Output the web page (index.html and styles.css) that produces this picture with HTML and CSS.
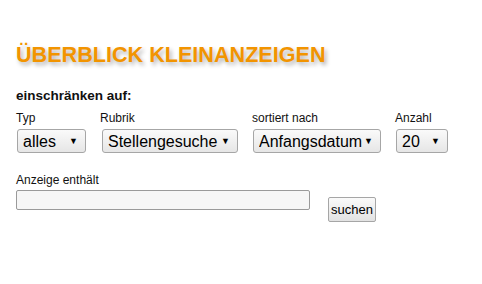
FILE: index.html
```html
<!DOCTYPE html>
<html lang="de">
<head>
    <meta charset="UTF-8">
    <title>Überblick Kleinanzeigen</title>
    <link rel="stylesheet" href="styles.css">
</head>
<body>

    <!-- Header -->
    <h1 class="page-title">Überblick Kleinanzeigen</h1>

    <!-- Filter form -->
    <form class="filter-form" onsubmit="return false;">
        <p class="filter-intro">einschränken auf:</p>

        <div class="filter-row">
            <div class="filter-col">
                <label for="typ">Typ</label>
                <div class="select-box sel-typ">
                    <select id="typ">
                        <option>alles</option>
                        <option>Angebote</option>
                        <option>Gesuche</option>
                    </select>
                </div>
            </div>
            <div class="filter-col">
                <label for="rubrik">Rubrik</label>
                <div class="select-box sel-rubrik">
                    <select id="rubrik">
                        <option>Stellengesuche</option>
                        <option>Stellenangebote</option>
                    </select>
                </div>
            </div>
            <div class="filter-col">
                <label for="sort">sortiert nach</label>
                <div class="select-box sel-sort">
                    <select id="sort">
                        <option>Anfangsdatum</option>
                        <option>Enddatum</option>
                    </select>
                </div>
            </div>
            <div class="filter-col">
                <label for="anzahl">Anzahl</label>
                <div class="select-box sel-anzahl">
                    <select id="anzahl">
                        <option>20</option>
                        <option>50</option>
                        <option>100</option>
                    </select>
                </div>
            </div>
        </div>

        <div class="search-row">
            <div class="search-col">
                <label for="suche">Anzeige enthält</label>
                <input type="text" id="suche">
            </div>
            <button type="submit" class="search-btn">suchen</button>
        </div>
    </form>

</body>
</html>
```

FILE: styles.css
```css
/* Reset styles */
* {
    margin: 0;
    padding: 0;
    box-sizing: border-box;
}

body {
    font-family: "Liberation Sans", Arial, sans-serif;
    color: #111;
    background-color: #fff;
    padding: 42px 16px 0 16px;
}

/* Header */
.page-title {
    font-size: 21.6px;
    font-weight: bold;
    text-transform: uppercase;
    color: #f29400;
    text-shadow: 2px 3px 4px rgba(0, 0, 0, 0.3);
    line-height: 26px;
}

/* Filter form */
.filter-intro {
    margin-top: 20px;
    font-size: 13.5px;
    font-weight: bold;
    line-height: 16px;
}

.filter-row {
    display: flex;
    gap: 14px;
    margin-top: 7px;
}

.filter-col label,
.search-col label {
    display: block;
    font-size: 12px;
    line-height: 15px;
}

.select-box {
    position: relative;
    margin-top: 3px;
    margin-left: 1px;
    height: 24px;
}

.sel-typ { width: 69px; }
.sel-rubrik { width: 136px; margin-left: 2px; }
.sel-sort { width: 128px; }
.sel-anzahl { width: 52px; }

select {
    -webkit-appearance: none;
    appearance: none;
    width: 100%;
    height: 100%;
    font-family: inherit;
    font-size: 16px;
    color: #000;
    padding: 0 16px 0 5px;
    border: 1px solid #a6a6a6;
    border-radius: 3px;
    background: linear-gradient(#fafafa, #e6e6e6);
}

/* little arrow on the right */
.select-box::after {
    content: "\25BC";
    position: absolute;
    right: 8px;
    top: 8px;
    font-size: 9px;
    line-height: 9px;
    color: #000;
    pointer-events: none;
}

.search-row {
    display: flex;
    align-items: flex-start;
    margin-top: 20px;
}

.search-col input {
    display: block;
    width: 294px;
    height: 20px;
    margin-top: 2px;
    border: 1px solid #9a9a9a;
    border-radius: 2px;
    background-color: #f6f6f6;
    font-family: inherit;
    font-size: 13px;
    padding: 0 4px;
}

.search-btn {
    margin-left: 18px;
    margin-top: 24px;
    height: 25px;
    padding: 0 2px;
    font-family: inherit;
    font-size: 13px;
    line-height: 23px;
    color: #000;
    border: 1px solid #a6a6a6;
    border-radius: 2px;
    background: linear-gradient(#fafafa, #e2e2e2);
    cursor: pointer;
}
```
